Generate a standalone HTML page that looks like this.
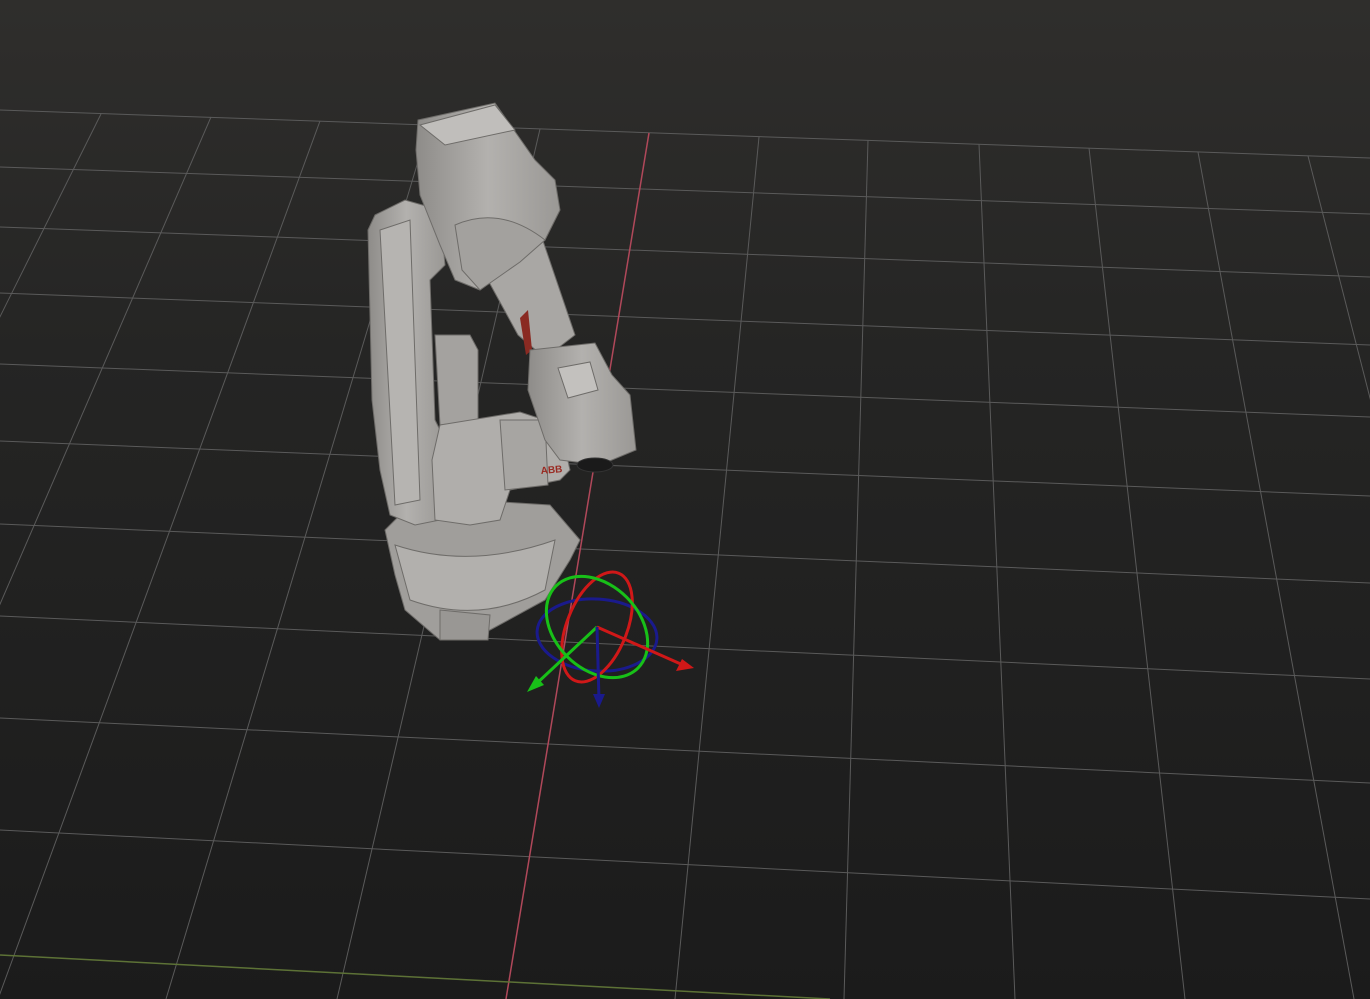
<!DOCTYPE html>
<html><head><meta charset="utf-8"><style>
html,body{margin:0;padding:0;width:1370px;height:999px;overflow:hidden;background:#1d1d1d}
svg{display:block}
</style></head><body>
<svg width="1370" height="999" viewBox="0 0 1370 999" xmlns="http://www.w3.org/2000/svg">
<defs>
<linearGradient id="bg" x1="0" y1="0" x2="0" y2="1">
<stop offset="0" stop-color="#2f2e2c"/><stop offset="0.35" stop-color="#252524"/><stop offset="1" stop-color="#1b1b1b"/>
</linearGradient>
<linearGradient id="metal" x1="0" y1="0" x2="1" y2="0">
<stop offset="0" stop-color="#8e8c89"/><stop offset="0.5" stop-color="#b3b1ae"/><stop offset="1" stop-color="#9a9895"/>
</linearGradient>
</defs>
<rect width="1370" height="999" fill="url(#bg)"/>
<g stroke="#5a5a5a" stroke-width="1" fill="none">
<line x1="0" y1="110" x2="1370" y2="158"/>
<line x1="0" y1="167" x2="1370" y2="214"/>
<line x1="0" y1="227" x2="1370" y2="277"/>
<line x1="0" y1="293" x2="1370" y2="345"/>
<line x1="0" y1="364" x2="1370" y2="417"/>
<line x1="0" y1="441" x2="1370" y2="496"/>
<line x1="0" y1="524" x2="1370" y2="583"/>
<line x1="0" y1="616" x2="1370" y2="679"/>
<line x1="0" y1="718" x2="1370" y2="783"/>
<line x1="0" y1="830" x2="1370" y2="899"/>
<line x1="-7" y1="110" x2="-509" y2="999"/>
<line x1="101" y1="114" x2="-340" y2="999"/>
<line x1="211" y1="117" x2="-171" y2="999"/>
<line x1="320" y1="121" x2="-2" y2="999"/>
<line x1="429" y1="125" x2="166" y2="999"/>
<line x1="540" y1="129" x2="337" y2="999"/>
<line x1="759" y1="137" x2="675" y2="999"/>
<line x1="868" y1="140" x2="844" y2="999"/>
<line x1="979" y1="144" x2="1015" y2="999"/>
<line x1="1089" y1="148" x2="1185" y2="999"/>
<line x1="1198" y1="152" x2="1354" y2="999"/>
<line x1="1308" y1="156" x2="1524" y2="999"/>
</g>
<line x1="649" y1="133" x2="506" y2="999" stroke="#b0485a" stroke-width="1.5"/>
<line x1="0" y1="955" x2="830" y2="999" stroke="#5d7236" stroke-width="1.5"/>

<!-- robot -->
<g stroke="#6e6c69" stroke-width="1">
<!-- base -->
<path d="M385 530 L400 515 L470 500 L550 505 L580 540 L570 560 L545 600 L490 630 L440 640 L405 610 L395 575 Z" fill="#a09e9b"/>
<path d="M395 545 Q470 570 555 540 L545 590 Q480 625 410 600 Z" fill="#b2b0ad"/>
<path d="M440 610 L490 615 L488 640 L440 640 Z" fill="#999794"/>
<!-- lower arm -->
<path d="M375 215 L405 200 L440 210 L445 265 L430 280 L435 420 L445 440 L440 520 L415 525 L390 515 L380 470 L372 400 L368 230 Z" fill="url(#metal)"/>
<path d="M380 230 L410 220 L420 500 L395 505 Z" fill="#b6b4b1"/>
<!-- motor block -->
<path d="M435 335 L470 335 L478 350 L478 420 L440 425 Z" fill="#a4a29f"/>
<!-- joint / forearm lower -->
<path d="M440 425 L520 412 L560 425 L570 470 L560 480 L510 490 L500 520 L470 525 L435 520 L432 460 Z" fill="#b0aeab"/>
<path d="M500 420 L545 420 L548 485 L505 490 Z" fill="#a7a5a2"/>
<!-- upper arm tube -->
<path d="M478 262 L542 238 L575 335 L545 358 L518 335 Z" fill="#a9a7a4"/>
<path d="M520 318 L528 310 L532 350 L526 355 Z" fill="#8a2a22" stroke="none"/>
<!-- upper head -->
<path d="M418 120 L495 103 L535 160 L555 180 L560 210 L545 240 L520 260 L480 290 L455 280 L440 245 L420 195 L416 150 Z" fill="url(#metal)"/>
<path d="M420 125 L495 105 L515 130 L445 145 Z" fill="#c0bebb"/>
<path d="M455 225 Q500 205 545 240 L520 262 L480 290 L462 270 Z" fill="#a3a19e"/>
<!-- wrist -->
<path d="M530 350 L595 343 L612 375 L630 395 L636 450 L600 465 L560 460 L545 440 L528 390 Z" fill="url(#metal)"/>
<path d="M558 368 L590 362 L598 390 L568 398 Z" fill="#c3c1be"/>
<ellipse cx="595" cy="465" rx="18" ry="7" fill="#1a1a1a" stroke="#333"/>
</g>
<text x="541" y="474" font-family="Liberation Sans, sans-serif" font-size="10" font-weight="bold" fill="#9a2a22" transform="rotate(-5 541 474)">ABB</text>

<!-- gizmo -->
<g fill="none" stroke-width="3">
<ellipse cx="597" cy="635" rx="60" ry="36" stroke="#1a1a8c" transform="rotate(4 597 635)"/>
<ellipse cx="597" cy="627" rx="30" ry="58" stroke="#d01818" transform="rotate(22 597 627)"/>
<ellipse cx="597" cy="627" rx="58" ry="42" stroke="#18c018" transform="rotate(45 597 627)"/>
</g>
<g stroke-width="3">
<line x1="597" y1="627" x2="683" y2="665" stroke="#d01818"/>
<line x1="597" y1="627" x2="535" y2="685" stroke="#18c018"/>
<line x1="597" y1="627" x2="599" y2="700" stroke="#1a1a8c"/>
</g>
<polygon points="694,668 676,671 682,659" fill="#d01818"/>
<polygon points="527,692 536,676 544,685" fill="#18c018"/>
<polygon points="599,708 593,694 605,694" fill="#1a1a8c"/>
</svg>
</body></html>
